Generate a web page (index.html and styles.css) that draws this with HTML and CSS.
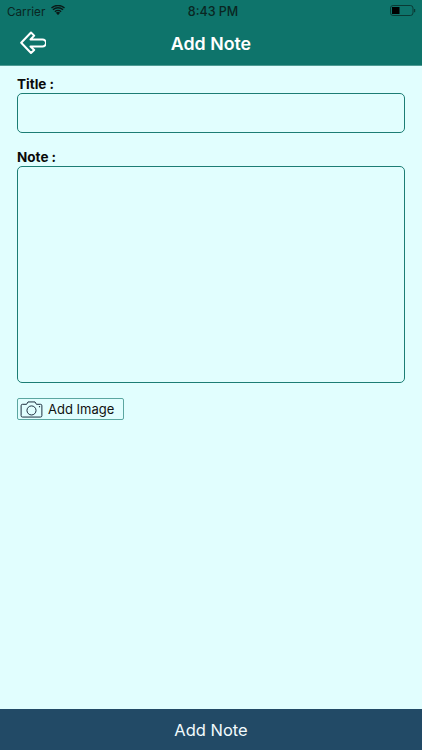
FILE: index.html
```html
<!DOCTYPE html>
<html lang="en">
<head>
<meta charset="utf-8">
<title>Add Note</title>
<link rel="stylesheet" href="styles.css">
</head>
<body>
<div class="screen">
  <header class="header">
    <div class="status">
      <div class="status-left">
        <span>Carrier</span>
        <svg class="wifi" viewBox="0 0 16 12" width="14" height="10.500"><path d="M8 11.600 5.600 8.900a3.400 3.400 0 0 1 4.800 0z" fill="#0a1a18"/><path d="M3.900 7.200a5.800 5.800 0 0 1 8.200 0l-1 1.100a4.400 4.400 0 0 0-6.200 0z" fill="#0a1a18"/><path d="M1.700 4.900a9 9 0 0 1 12.600 0l-1.100 1.200a7.400 7.400 0 0 0-10.400 0z" fill="#0a1a18"/><path d="M0 2.900a11.600 11.600 0 0 1 16 0l-1.100 1.200a10 10 0 0 0-13.800 0z" fill="#0a1a18"/></svg>
      </div>
      <span class="status-time">8:43 PM</span>
      <div class="status-right">
        <svg viewBox="0 0 26 11" width="26" height="11"><rect x="0.500" y="0.500" width="22.500" height="10" rx="2.600" fill="none" stroke="#0a3a35" stroke-width="1"/><rect x="2" y="2" width="7.500" height="7" fill="#000"/><rect x="24" y="4" width="1.200" height="3.200" fill="#0a3a35"/></svg>
      </div>
    </div>
    <div class="nav">
      <svg class="back" viewBox="0 0 26 24" width="26" height="24"><path d="M11 1.500 1.200 11.800 11 22l3.200-3-3.700-3.500H22.500a3.500 3.500 0 0 0 0-7H10.500l3.700-3.900z" fill="none" stroke="#fff" stroke-width="2" stroke-linejoin="round"/></svg>
      <h1 class="nav-title">Add Note</h1>
    </div>
  </header>
  <main class="form">
    <label class="label">Title :</label>
    <div class="field field-title"></div>
    <label class="label label-note">Note :</label>
    <div class="field field-note"></div>
    <button class="image-btn" type="button">
      <svg viewBox="0 0 24 18" width="23" height="17"><path d="M2.500 3.500h4.300l1.500-2.500h7.400l1.500 2.500h4.300a1.500 1.500 0 0 1 1.500 1.500v10.500a1.500 1.500 0 0 1-1.500 1.500H2.500A1.500 1.500 0 0 1 1 15.500V5a1.500 1.500 0 0 1 1.500-1.500z" fill="none" stroke="#123" stroke-width="1"/><circle cx="12" cy="10" r="4.800" fill="none" stroke="#123" stroke-width="1"/><circle cx="20.500" cy="6" r="0.700" fill="#123"/></svg>
      <span>Add Image</span>
    </button>
  </main>
  <button class="submit" type="button">Add Note</button>
</div>
</body>
</html>
```
FILE: styles.css
```css
* { box-sizing: border-box; }
html, body { margin: 0; padding: 0; }
body { width: 422px; height: 750px; overflow: hidden; font-family: Inter, "Liberation Sans", sans-serif; }
.screen { width: 422px; height: 750px; display: flex; flex-direction: column; background: #e1fefe; }
.header { height: 66px; flex: none; background: #0e746b; border-bottom: 1px solid #4e9b94; color: #fff; }
.status { height: 22px; padding: 1px 6px 0 7px; display: flex; align-items: center; justify-content: space-between; position: relative; font-size: 11.700px; color: #0a2622; }
.status-left { display: flex; align-items: center; gap: 6px; }
.wifi { margin-top: -3px; }
.status-time { position: absolute; left: 4px; right: 0; text-align: center; font-weight: 500; font-size: 12.500px; }
.status-right { display: flex; margin-top: -2px; }
.nav { height: 43px; position: relative; display: flex; align-items: center; justify-content: center; }
.back { position: absolute; left: 20px; top: 9px; }
.nav-title { margin: 0; font-size: 17.800px; font-weight: 600; color: #fff; }
.form { flex: 1; padding: 10px 17px 0; display: flex; flex-direction: column; align-items: flex-start; }
.label { font-size: 13.500px; font-weight: 700; line-height: 16px; color: #0a0a0a; height: 17px; }
.field { width: 388px; border: 1px solid #1c7d74; border-radius: 5px; }
.field-title { height: 40px; }
.label-note { margin-top: 16px; }
.field-note { height: 217px; }
.image-btn { margin-top: 15px; width: 107px; height: 22px; padding: 0 0 0 2px; display: flex; align-items: center; gap: 5px; background: transparent; border: 1px solid #5ba6a0; border-radius: 2px; font: inherit; font-size: 13px; color: #111; }
.submit { height: 41px; flex: none; width: 100%; border: 0; background: #224a66; color: #f2fbfd; font: inherit; font-size: 16.500px; }
```
